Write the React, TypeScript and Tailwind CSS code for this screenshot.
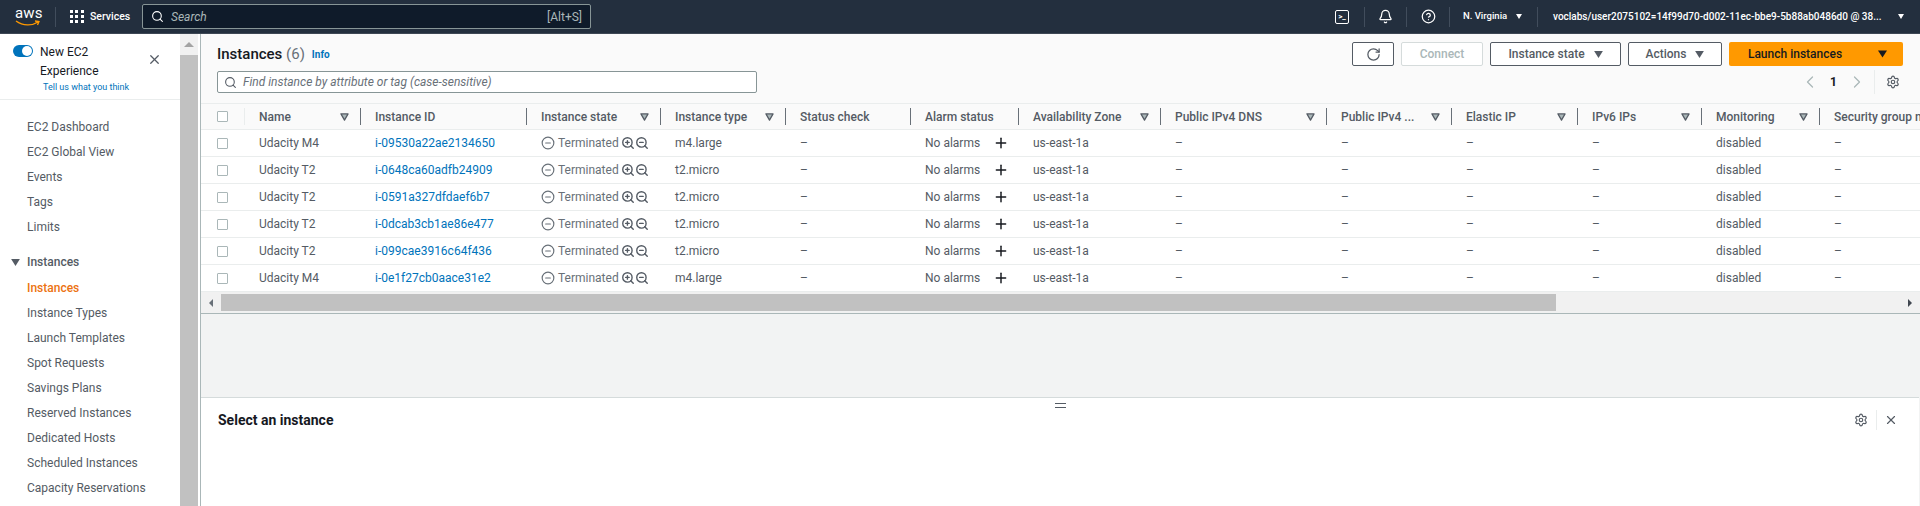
import { ChevronLeft, ChevronRight, CircleHelp, CircleMinus, Plus, RotateCw, Search, Settings, Bell, X, ZoomIn, ZoomOut } from "lucide-react"

const gridCols = "grid grid-cols-[44px_116px_166px_134px_125px_125px_108px_142px_166px_125px_126px_124px_118px_220px]"

const columns = [
  { label: "Name", sort: true },
  { label: "Instance ID", sort: false },
  { label: "Instance state", sort: true },
  { label: "Instance type", sort: true },
  { label: "Status check", sort: false },
  { label: "Alarm status", sort: false },
  { label: "Availability Zone", sort: true },
  { label: "Public IPv4 DNS", sort: true },
  { label: "Public IPv4 ...", sort: true },
  { label: "Elastic IP", sort: true },
  { label: "IPv6 IPs", sort: true },
  { label: "Monitoring", sort: true },
  { label: "Security group name", sort: false },
]

const rows = [
  { name: "Udacity M4", id: "i-09530a22ae2134650", type: "m4.large" },
  { name: "Udacity T2", id: "i-0648ca60adfb24909", type: "t2.micro" },
  { name: "Udacity T2", id: "i-0591a327dfdaef6b7", type: "t2.micro" },
  { name: "Udacity T2", id: "i-0dcab3cb1ae86e477", type: "t2.micro" },
  { name: "Udacity T2", id: "i-099cae3916c64f436", type: "t2.micro" },
  { name: "Udacity M4", id: "i-0e1f27cb0aace31e2", type: "m4.large" },
]

const navTop = ["EC2 Dashboard", "EC2 Global View", "Events", "Tags", "Limits"]
const navInstances = ["Instance Types", "Launch Templates", "Spot Requests", "Savings Plans", "Reserved Instances", "Dedicated Hosts", "Scheduled Instances", "Capacity Reservations"]

function Caret({ className }: { className?: string }) {
  return (
    <svg viewBox="0 0 10 8" className={className}>
      <path d="M0 0h10L5 8z" fill="currentColor" />
    </svg>
  )
}

function SortCaret() {
  return (
    <svg viewBox="0 0 10 9" className="w-[9px] h-[8px] text-[#545b64] shrink-0">
      <path d="M1 1h8L5 8z" fill="#aab7b8" stroke="currentColor" strokeWidth="1.4" strokeLinejoin="round" />
    </svg>
  )
}

function CheckBox() {
  return <div className="w-[11px] h-[11px] border border-[#aab7b8] rounded-[1px] bg-white" />
}

function TopBar() {
  return (
    <header className="h-[34px] bg-[#232f3e] border-b border-[#3d4754] flex items-center text-white text-[12px] shrink-0">
      <div className="w-[55px] pl-[15px] flex flex-col items-start">
        <span className="text-[15px] leading-[13px] tracking-[0.2px]">aws</span>
        <svg viewBox="0 0 26 7" className="w-[26px] h-[7px]">
          <path d="M1 1c7 5 16 5 22 1M20 1l4 .5-1.5 3.5" fill="none" stroke="#ff9900" strokeWidth="1.3" />
        </svg>
      </div>
      <div className="h-[20px] border-l border-[#414d5c]" />
      <div className="ml-[14px] w-[14px] grid grid-cols-3 gap-[2px]">
        {Array.from({ length: 9 }).map((_, i) => (
          <div key={i} className="w-[3px] h-[3px] bg-white" />
        ))}
      </div>
      <span className="ml-[6px] w-[39px] text-[10.5px] font-medium whitespace-nowrap">Services</span>
      <div className="ml-[13px] w-[449px] h-[25px] bg-[#0f1b2a] border border-[#879596] rounded-[2px] flex items-center pl-[8px] pr-[8px]">
        <Search className="w-[13px] h-[13px] text-white" />
        <span className="ml-[7px] italic text-[#aab7b8]">Search</span>
        <span className="ml-auto text-[#aab7b8]">[Alt+S]</span>
      </div>
      <div className="ml-auto flex items-center">
        <div className="w-[14px] h-[14px] border-[1.5px] border-white rounded-[2px] flex items-center justify-center text-[8px] font-bold leading-none">&gt;_</div>
        <div className="ml-[15px] h-[20px] border-l border-[#414d5c]" />
        <Bell className="ml-[13px] w-[15px] h-[15px]" />
        <div className="ml-[13px] h-[20px] border-l border-[#414d5c]" />
        <CircleHelp className="ml-[14px] w-[15px] h-[15px]" />
        <div className="ml-[13px] h-[20px] border-l border-[#414d5c]" />
        <span className="ml-[13px] w-[47px] text-[9.5px] font-medium whitespace-nowrap">N. Virginia</span>
        <Caret className="ml-[6px] w-[6px] h-[5px]" />
        <div className="ml-[15px] h-[20px] border-l border-[#414d5c]" />
        <span className="ml-[15px] w-[339px] text-[10px] font-medium whitespace-nowrap">voclabs/user2075102=14f99d70-d002-11ec-bbe9-5b88ab0486d0 @ 38...</span>
        <Caret className="ml-[6px] mr-[16px] w-[6px] h-[5px]" />
      </div>
    </header>
  )
}

function Sidebar() {
  return (
    <aside className="w-[180px] shrink-0 bg-white text-[#545b64] text-[12px]">
      <div className="h-[66px] border-b border-[#eaeded] flex">
        <div className="pl-[13px] pt-[11px]">
          <div className="w-[20px] h-[12px] rounded-full bg-[#0073bb] flex justify-end items-center pr-[1px]">
            <div className="w-[10px] h-[10px] rounded-full bg-white" />
          </div>
        </div>
        <div className="ml-[7px] w-[100px]">
          <div className="text-[#16191f] leading-[19px] pt-[9px]">New EC2<br />Experience</div>
          <div className="ml-[3px] mt-[1px] text-[9px] text-[#0073bb] leading-[11px]">Tell us what you think</div>
        </div>
        <X className="ml-[7px] mt-[18px] w-[15px] h-[15px] text-[#545b64]" />
      </div>
      <nav className="pt-[14px]">
        {navTop.map((item) => (
          <div key={item} className="pl-[27px] h-[25px] flex items-center">{item}</div>
        ))}
      </nav>
      <div className="mt-[10px] h-[26px] pl-[11px] flex items-center font-medium">
        <Caret className="w-[9px] h-[7px] text-[#545b64]" />
        <span className="ml-[7px]">Instances</span>
      </div>
      <div className="pl-[27px] h-[25px] flex items-center font-medium text-[#ec7211]">Instances</div>
      {navInstances.map((item) => (
        <div key={item} className="pl-[27px] h-[25px] flex items-center">{item}</div>
      ))}
    </aside>
  )
}

function Toolbar() {
  return (
    <div className="bg-[#fafafa] pl-[16px] pr-[17px] pt-[8px] pb-[10px] text-[12px]">
      <div className="flex items-center h-[24px]">
        <h1 className="text-[15px] font-medium text-[#16191f]">
          Instances <span className="font-normal text-[#687078]">(6)</span>
        </h1>
        <span className="ml-[7px] text-[10px] font-bold text-[#0073bb]">Info</span>
        <div className="ml-auto flex items-center gap-[7px] font-medium">
          <div className="w-[42px] h-[24px] border border-[#545b64] rounded-[2px] bg-white flex items-center justify-center">
            <RotateCw className="w-[15px] h-[15px] text-[#545b64]" />
          </div>
          <div className="w-[82px] h-[24px] border border-[#d5dbdb] rounded-[2px] flex items-center justify-center text-[#aab7b8] bg-white">Connect</div>
          <div className="w-[131px] h-[24px] border border-[#545b64] rounded-[2px] bg-white flex items-center justify-center gap-[9px] text-[#545b64]">
            Instance state <Caret className="w-[9px] h-[7px]" />
          </div>
          <div className="w-[94px] h-[24px] border border-[#545b64] rounded-[2px] bg-white flex items-center justify-center gap-[9px] text-[#545b64]">
            Actions <Caret className="w-[9px] h-[7px]" />
          </div>
          <div className="w-[174px] h-[24px] bg-[#ff9900] rounded-[2px] flex items-center text-[#16191f]">
            <div className="w-[132px] text-center">Launch instances</div>
            <div className="w-[42px] flex justify-center">
              <Caret className="w-[9px] h-[8px]" />
            </div>
          </div>
        </div>
      </div>
      <div className="mt-[5px] flex items-center h-[22px]">
        <div className="w-[540px] h-[22px] bg-white border border-[#879596] rounded-[2px] flex items-center pl-[6px]">
          <Search className="w-[13px] h-[13px] text-[#545b64]" />
          <span className="ml-[6px] italic text-[#687078]">Find instance by attribute or tag (case-sensitive)</span>
        </div>
        <div className="ml-auto flex items-center text-[#545b64]">
          <ChevronLeft className="w-[20px] h-[20px] text-[#aab7b8]" strokeWidth={1.5} />
          <span className="ml-[10px] font-bold text-[#16191f]">1</span>
          <ChevronRight className="ml-[10px] w-[20px] h-[20px] text-[#aab7b8]" strokeWidth={1.5} />
          <div className="ml-[7px] h-[24px] border-l border-[#eaeded]" />
          <Settings className="ml-[11px] mr-[3px] w-[14px] h-[14px]" />
        </div>
      </div>
    </div>
  )
}

function InstancesTable() {
  return (
    <div className="overflow-hidden text-[12px] text-[#545b64]">
      <div className={`${gridCols} w-[1860px] h-[27px] bg-[#fafafa] border-y border-[#eaeded] items-center`}>
        <div className="h-[17px] pl-[16px] flex items-center border-r border-[#eaeded]">
          <CheckBox />
        </div>
        {columns.map((col) => (
          <div key={col.label} className="h-[17px] flex items-center justify-between pl-[14px] font-medium border-r border-[#687078] pr-[11px] last:border-r-0">
            <span className="whitespace-nowrap">{col.label}</span>
            {col.sort && <SortCaret />}
          </div>
        ))}
      </div>
      {rows.map((row) => (
        <div key={row.id} className={`${gridCols} w-[1860px] h-[27px] bg-white border-b border-[#eaeded] items-center`}>
          <div className="pl-[16px] flex items-center">
            <CheckBox />
          </div>
          <div className="pl-[14px]">{row.name}</div>
          <div className="pl-[14px] text-[#0073bb]">{row.id}</div>
          <div className="pl-[14px] flex items-center text-[#687078]">
            <CircleMinus className="w-[14px] h-[14px]" />
            <span className="ml-[3px]">Terminated</span>
            <ZoomIn className="ml-[2px] w-[14px] h-[14px] text-[#545b64]" strokeWidth={2.4} />
            <ZoomOut className="w-[14px] h-[14px] text-[#545b64]" strokeWidth={2.4} />
          </div>
          <div className="pl-[14px]">{row.type}</div>
          <div className="pl-[14px]">–</div>
          <div className="pl-[14px] flex items-center">
            <span>No alarms</span>
            <Plus className="ml-[13px] w-[16px] h-[16px] text-[#16191f]" strokeWidth={2.2} />
          </div>
          <div className="pl-[14px]">us-east-1a</div>
          <div className="pl-[14px]">–</div>
          <div className="pl-[14px]">–</div>
          <div className="pl-[14px]">–</div>
          <div className="pl-[14px]">–</div>
          <div className="pl-[14px]">disabled</div>
          <div className="pl-[14px]">–</div>
        </div>
      ))}
    </div>
  )
}

function HorizontalScrollbar() {
  return (
    <div className="h-[22px] bg-[#f1f1f1] border-b border-[#aab7b8] flex items-center">
      <div className="w-[20px] flex justify-center">
        <div className="border-y-[4px] border-y-transparent border-r-[4px] border-r-[#687078]" />
      </div>
      <div className="w-[1335px] h-[17px] bg-[#c1c1c1]" />
      <div className="ml-auto w-[20px] flex justify-center">
        <div className="border-y-[4px] border-y-transparent border-l-[4px] border-l-[#414750]" />
      </div>
    </div>
  )
}

function DetailPanel() {
  return (
    <div className="flex-1 bg-white border-t border-[#d5dbdb] mr-[1px]">
      <div className="flex justify-center pt-[5px] h-[12px]">
        <div className="w-[11px] h-[5px] border-y border-[#545b64]" />
      </div>
      <div className="flex items-center pl-[17px] h-[20px]">
        <span className="text-[14px] font-bold text-[#16191f]">Select an instance</span>
        <div className="ml-auto flex items-center">
          <Settings className="w-[14px] h-[14px] text-[#545b64]" />
          <div className="ml-[8px] h-[20px] border-l border-[#eaeded]" />
          <X className="ml-[7px] mr-[21px] w-[14px] h-[14px] text-[#545b64]" />
        </div>
      </div>
    </div>
  )
}

export default function App() {
  return (
    <div className="h-[506px] overflow-hidden flex flex-col bg-white font-['Roboto',sans-serif]">
      <TopBar />
      <div className="flex flex-1 min-h-0">
        <Sidebar />
        <div className="w-[20px] shrink-0 bg-[#f1f1f1] flex flex-col border-r-2 border-white">
          <div className="h-[21px] flex items-center justify-center">
            <div className="border-x-[5px] border-x-transparent border-b-[5px] border-b-[#a3a3a3]" />
          </div>
          <div className="flex-1 bg-[#c1c1c1]" />
        </div>
        <main className="flex-1 min-w-0 border-l border-[#aab7b8] flex flex-col bg-[#f2f3f3]">
          <Toolbar />
          <InstancesTable />
          <HorizontalScrollbar />
          <div className="h-[83px]" />
          <DetailPanel />
        </main>
      </div>
    </div>
  )
}
